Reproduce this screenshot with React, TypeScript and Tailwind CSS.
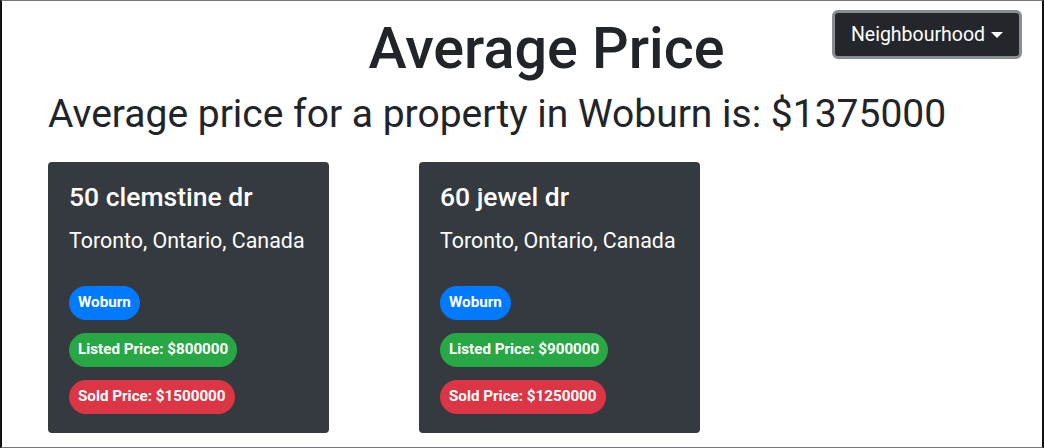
const listings = [
  {
    address: "50 clemstine dr",
    location: "Toronto, Ontario, Canada",
    neighbourhood: "Woburn",
    listed: 800000,
    sold: 1500000,
  },
  {
    address: "60 jewel dr",
    location: "Toronto, Ontario, Canada",
    neighbourhood: "Woburn",
    listed: 900000,
    sold: 1250000,
  },
];

function Pill({ className, children }: { className: string; children: React.ReactNode }) {
  return (
    <span
      className={`inline-flex h-[34px] items-center rounded-full px-[9px] text-[15.2px] font-bold text-white ${className}`}
    >
      {children}
    </span>
  );
}

export default function App() {
  return (
    <div
      className="h-[448px] w-[1044px] overflow-hidden border-x-2 border-y border-x-[#111] border-y-[#777] bg-white text-[#212529]"
      style={{ fontFamily: "Roboto, 'Noto Sans', sans-serif" }}
    >
      <div className="relative">
        <h1 className="pl-[49px] pt-[13px] text-center text-[57.5px] font-medium leading-[1.2]">
          Average Price
        </h1>
        <button className="absolute right-[20px] top-[9px] flex h-[49px] items-center gap-[6px] rounded-[6px] border-[3px] border-[#8a8d90] bg-[#23272b] px-[16px] text-[19.5px] text-white">
          Neighbourhood
          <span className="mt-[1px] h-0 w-0 border-x-[6px] border-t-[6px] border-x-transparent border-t-white" />
        </button>
      </div>

      <p className="mt-[8px] pl-[46px] text-[39px] font-normal leading-[1.2]">
        Average price for a property in Woburn is: $1375000
      </p>

      <div className="mt-[24px] flex gap-[90px] pl-[46px]">
        {listings.map((item) => (
          <div
            key={item.address}
            className="h-[271px] w-[281px] rounded-[4px] bg-[#343a40] px-[21px] pt-[19px] text-white"
          >
            <h4 className="text-[26.5px] font-medium leading-[1.2]">{item.address}</h4>
            <p className="mt-[12px] text-[21.4px] leading-[1.5]">{item.location}</p>
            <div className="mt-[29px] flex flex-col items-start gap-[13px]">
              <Pill className="bg-[#007bff]">{item.neighbourhood}</Pill>
              <Pill className="bg-[#28a745]">Listed Price: ${item.listed}</Pill>
              <Pill className="bg-[#dc3545]">Sold Price: ${item.sold}</Pill>
            </div>
          </div>
        ))}
      </div>
    </div>
  );
}
